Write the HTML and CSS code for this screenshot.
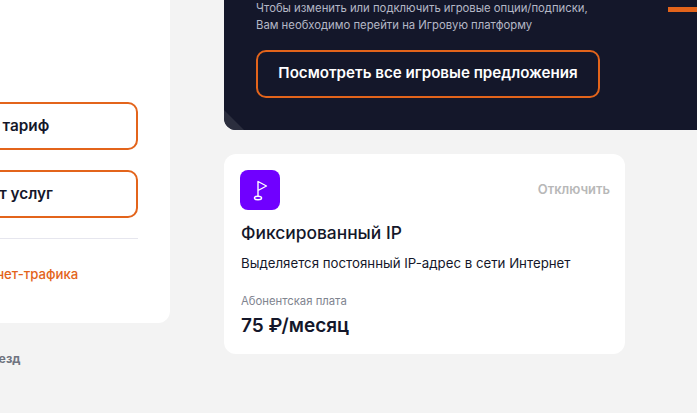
FILE: index.html
```html
<!DOCTYPE html>
<html lang="ru">
<head>
    <meta charset="UTF-8">
    <title>Фиксированный IP</title>
    <link rel="stylesheet" href="styles.css">
</head>
<body>
    <div class="page">
        <div class="side">
            <div class="side-card">
                <a class="outline-button dark-text">Сменить тариф</a>
                <a class="outline-button dark-text">Мой пакет услуг</a>
                <div class="divider"></div>
                <a class="orange-link">Детализация интернет-трафика</a>
            </div>
            <a class="side-link">Переезд</a>
        </div>
        <div class="main">
            <div class="games">
                <div class="games-body">
                    <p class="games-text">Чтобы изменить или подключить игровые опции/подписки,<br>Вам необходимо перейти на Игровую платформу</p>
                    <a class="outline-button light-text">Посмотреть все игровые предложения</a>
                </div>
                <div class="games-bar"></div>
                <div class="games-corner"></div>
            </div>
            <div class="option-card">
                <div class="option-head">
                    <div class="option-icon">
                        <svg width="40" height="40" viewBox="0 0 40 40" fill="none" stroke="#fff" stroke-width="1.4" stroke-linejoin="round">
                            <path d="M18 27V11.5L26.5 16L18 20.5"/>
                            <ellipse cx="18" cy="28" rx="3.6" ry="1.8"/>
                        </svg>
                    </div>
                    <a class="option-off">Отключить</a>
                </div>
                <h2 class="option-title">Фиксированный IP</h2>
                <p class="option-desc">Выделяется постоянный IP-адрес в сети Интернет</p>
                <div class="option-label">Абонентская плата</div>
                <div class="option-price">75 ₽/месяц</div>
            </div>
        </div>
    </div>
</body>
</html>
```

FILE: styles.css
```css
html, body {
    height: 100%;
}
body {
    margin: 0;
    overflow: hidden;
    background-color: #f3f3f3;
    font-family: Inter, "Noto Sans", sans-serif;
    color: #14172a;
}
.page {
    display: flex;
    gap: 54px;
    margin-top: -100px;
    margin-left: -190px;
}
.side {
    flex: none;
    width: 360px;
}
.side-card {
    background-color: #fff;
    border-radius: 12px;
    padding: 202px 32px 40px;
}
.outline-button {
    display: flex;
    align-items: center;
    justify-content: center;
    box-sizing: border-box;
    height: 48px;
    border: 2px solid #e3641b;
    border-radius: 10px;
    font-weight: 600;
}
.dark-text {
    margin-bottom: 20px;
    padding-bottom: 1px;
    font-size: 15.3px;
    color: #14172a;
}
.light-text {
    width: 344px;
    padding-bottom: 3px;
    font-size: 15.15px;
    color: #fff;
}
.divider {
    height: 1px;
    background-color: #e6e6ee;
    margin-bottom: 26px;
}
.orange-link {
    display: block;
    padding-left: 27px;
    font-size: 13.2px;
    font-weight: 500;
    line-height: 18px;
    color: #e3641b;
}
.side-link {
    display: block;
    margin-top: 28px;
    padding-left: 157px;
    font-size: 12.3px;
    font-weight: 700;
    line-height: 16px;
    color: #6f7480;
}
.main {
    flex: none;
    width: 401px;
}
.games {
    position: relative;
    display: flex;
    align-items: flex-start;
    width: 520px;
    height: 230px;
    overflow: hidden;
    border-radius: 0 0 12px 12px;
    background-color: #14172a;
}
.games-body {
    flex: none;
    padding: 100px 0 0 32px;
}
.games-text {
    margin: 0 0 16px;
    font-size: 11.3px;
    line-height: 17px;
    color: #b4b8c6;
}
.games-bar {
    flex: none;
    width: 60px;
    height: 5px;
    margin: 107px 0 0 68px;
    background-color: #e3641b;
}
.games-corner {
    position: absolute;
    left: 0;
    bottom: 0;
    width: 20px;
    height: 20px;
    background-color: #2b2e3e;
    clip-path: polygon(0 0, 100% 100%, 0 100%);
}
.option-card {
    box-sizing: border-box;
    height: 200px;
    margin-top: 24px;
    padding: 16px 15px 16px 16px;
    background-color: #fff;
    border-radius: 12px;
}
.option-head {
    display: flex;
    justify-content: space-between;
    align-items: center;
}
.option-icon {
    width: 40px;
    height: 40px;
    border-radius: 8px;
    background-color: #7000ff;
}
.option-icon svg {
    display: block;
}
.option-off {
    margin-top: -2px;
    font-size: 12.9px;
    font-weight: 600;
    color: #b8b8b8;
}
.option-title {
    margin: 11px 0 0 1px;
    font-size: 17.4px;
    line-height: 24px;
    font-weight: 500;
}
.option-desc {
    margin: 9px 0 0 1px;
    font-size: 13.25px;
    line-height: 18px;
}
.option-label {
    margin: 21px 0 0 1px;
    font-size: 11.3px;
    line-height: 16px;
    color: #80848f;
}
.option-price {
    margin: 5px 0 0 1px;
    font-size: 19px;
    line-height: 24px;
    font-weight: 600;
}
```
